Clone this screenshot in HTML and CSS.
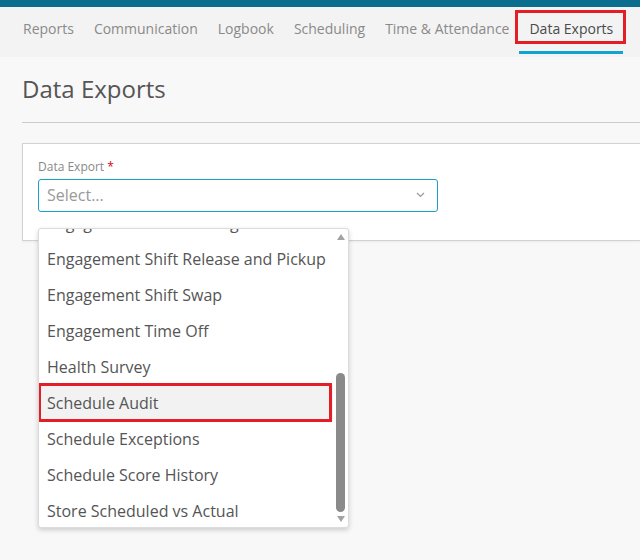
FILE: index.html
```html
<!DOCTYPE html>
<html lang="en">
<head>
  <meta charset="utf-8">
  <link rel="stylesheet" href="styles.css">
</head>
<body>

<div class="topbar"></div>

<div class="nav">
  <div class="tab">Reports</div>
  <div class="tab">Communication</div>
  <div class="tab">Logbook</div>
  <div class="tab">Scheduling</div>
  <div class="tab">Time &amp; Attendance</div>
  <div class="tab active marked">Data Exports</div>
</div>

<div class="main">
  <h1 class="title">Data Exports</h1>
  <div class="rule"></div>

  <div class="card">
    <div class="label">Data Export <span class="req">*</span></div>
    <div class="select">
      <span class="placeholder">Select...</span>
      <svg class="chevron" width="9" height="6" viewBox="0 0 9 6"><path d="M1 1l3.5 3.5L8 1" fill="none" stroke="#999" stroke-width="1.2"/></svg>
    </div>

    <!-- open option list -->
    <div class="menu">
      <div class="options">
        <div class="option">Engagement Shift Bidding</div>
        <div class="option">Engagement Shift Release and Pickup</div>
        <div class="option">Engagement Shift Swap</div>
        <div class="option">Engagement Time Off</div>
        <div class="option">Health Survey</div>
        <div class="option hover marked">Schedule Audit</div>
        <div class="option">Schedule Exceptions</div>
        <div class="option">Schedule Score History</div>
        <div class="option">Store Scheduled vs Actual</div>
      </div>
      <div class="scrollbar">
        <div class="arrow up"></div>
        <div class="track"><div class="thumb"></div></div>
        <div class="arrow down"></div>
      </div>
    </div>
  </div>
</div>

</body>
</html>
```

FILE: styles.css
```css
html, body {
  height: 100%;
}

body {
  margin: 0;
  min-height: 560px;
  background-color: #f8f8f8;
  font-family: "Open Sans", sans-serif;
  }

.topbar {
  height: 7px;
  background-color: #0b6e8e;
  }

.nav {
  display: flex;
  height: 50px;
  padding-left: 13px;
  background-color: #f3f3f3;
  }

.tab {
  position: relative;
  display: flex;
  align-items: center;
  padding: 0 10px 8px 10px;
  font-size: 14px;
  color: #8a8a8a;
  white-space: nowrap;
  }

.tab.active {
  color: #4a4a4a;
  }

.tab.active::after {
  content: "";
  position: absolute;
  left: 0;
  right: 0;
  bottom: 3px;
  height: 3px;
  background-color: #12a3cf;
  }

/* red call-out frame */
.marked::before {
  content: "";
  position: absolute;
  border: 3px solid #e41e26;
  pointer-events: none;
  z-index: 1;
  }

.tab.marked::before {
  left: -4px;
  right: -3px;
  top: 3px;
  bottom: 13px;
  }

.main {
  padding-left: 22px;
  }

.title {
  margin: 16px 0 0 0;
  font-size: 24px;
  line-height: 32px;
  font-weight: 400;
  color: #555;
  }

.rule {
  margin-top: 17px;
  border-top: 1px solid #ccc;
  }

.card {
  position: relative;
  margin-top: 20px;
  height: 98px;
  box-sizing: border-box;
  padding: 15px 15px 0 15px;
  background-color: #fff;
  border: 1px solid #d2d2d2;
  border-right: none;
  box-shadow: 0 1px 2px rgba(0,0,0,0.06);
  }

.label {
  font-size: 12px;
  line-height: 16px;
  color: #888;
  }

.req {
  color: #d0021b;
  }

.select {
  display: flex;
  align-items: center;
  justify-content: space-between;
  margin-top: 4px;
  width: 400px;
  height: 33px;
  box-sizing: border-box;
  padding: 0 12px 1px 8px;
  border: 1px solid #1a9fc9;
  border-radius: 3px;
  }

.placeholder {
  font-size: 16px;
  color: #999;
  }

.menu {
  position: absolute;
  z-index: 5;
  top: 84px;
  left: 15px;
  width: 311px;
  height: 300px;
  box-sizing: border-box;
  display: flex;
  background-color: #fff;
  border: 1px solid #dcdcdc;
  border-radius: 3px;
  box-shadow: 0 2px 5px rgba(0,0,0,0.18);
  overflow: hidden;
  }

.options {
  flex: 1;
  margin-top: -24px;
  }

.option {
  position: relative;
  height: 36px;
  line-height: 36px;
  padding-left: 8px;
  font-size: 16px;
  color: #555;
  white-space: nowrap;
  }

.option.hover {
  background-color: #f2f2f2;
  }

.option.marked::before {
  left: -1px;
  right: 1px;
  top: -2px;
  bottom: -1px;
  }

.scrollbar {
  width: 15px;
  display: flex;
  flex-direction: column;
  align-items: center;
  }

.arrow {
  width: 0;
  height: 0;
  border-left: 4px solid transparent;
  border-right: 4px solid transparent;
  }

.arrow.up {
  margin-top: 5px;
  border-bottom: 6px solid #a3a3a3;
  }

.arrow.down {
  margin: 2px 0 5px 0;
  border-top: 6px solid #a3a3a3;
  }

.track {
  flex: 1;
  width: 100%;
  display: flex;
  flex-direction: column;
  justify-content: flex-end;
  align-items: center;
  padding-bottom: 2px;
  }

.thumb {
  width: 9px;
  height: 139px;
  border-radius: 5px;
  background-color: #8a8a8a;
  }
```
